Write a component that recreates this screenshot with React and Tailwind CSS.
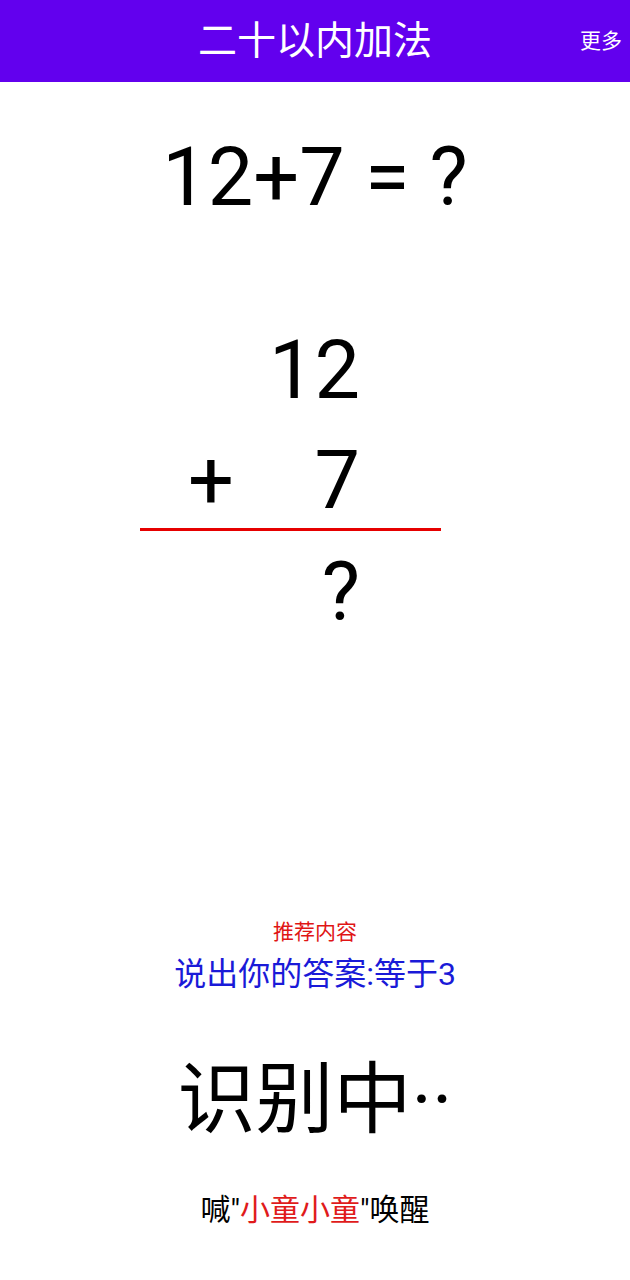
const cjk = "font-['Roboto','Noto_Sans_CJK_SC',sans-serif]";

function Header() {
  return (
    <div className="grid h-[82px] grid-cols-[1fr_auto_1fr] items-center bg-[#6200ee] text-white">
      <div />
      <h1 className={`${cjk} text-[39px] leading-none`}>二十以内加法</h1>
      <div className="flex justify-end pr-[8px]">
        <span className={`${cjk} text-[21px] leading-none`}>更多</span>
      </div>
    </div>
  );
}

// vertical (column) form of the sum
function Vertical({ top, op, bottom, answer }) {
  return (
    <div className="ml-[140px] w-[301px] font-['Roboto',sans-serif] text-[81px] leading-none text-black">
      <div className="grid grid-cols-[100px_120px]">
        <span />
        <span className="text-right">{top}</span>
      </div>
      <div className="mt-[29px] grid grid-cols-[100px_120px]">
        <span className="pl-[48px]">{op}</span>
        <span className="text-right">{bottom}</span>
      </div>
      <div className="mt-[7px] h-[3px] bg-[#e60000]" />
      <div className="mt-[21px] grid grid-cols-[100px_120px]">
        <span />
        <span className="text-right">{answer}</span>
      </div>
    </div>
  );
}

export default function App() {
  return (
    <div className="flex h-[1280px] w-[630px] flex-col bg-white">
      <Header />
      <div className="mt-[55px] text-center font-['Roboto',sans-serif] text-[81px] leading-none text-black">
        12+7 = ?
      </div>
      <div className="mt-[112px]">
        <Vertical top="12" op="+" bottom="7" answer="?" />
      </div>

      <div className={`${cjk} mt-[289px] text-center text-[21px] leading-none text-[#e01515]`}>推荐内容</div>
      <div className={`${cjk} mt-[15px] text-center text-[32px] leading-none text-[#1a1ad8]`}>
        说出你的答案:等于3
      </div>
      <div className={`${cjk} mt-[72px] text-center text-[78px] leading-none text-black`}>识别中··</div>
      <div className={`${cjk} mt-[55px] text-center text-[30px] leading-none text-black`}>
        喊"<span className="text-[#e01b1b]">小童小童</span>"唤醒
      </div>
    </div>
  );
}
